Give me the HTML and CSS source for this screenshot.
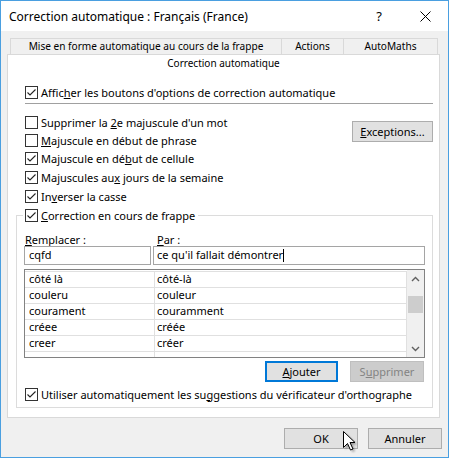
FILE: index.html
```html
<!DOCTYPE html>
<html lang="fr">
<head>
<meta charset="utf-8">
<title>Correction automatique</title>
<link rel="stylesheet" href="styles.css">
</head>
<body>
<div class="window">
  <div class="titlebar">
    <span class="title">Correction automatique : Français (France)</span>
    <span class="tb-btn help">?</span>
    <span class="tb-btn close"><svg width="11" height="11" viewBox="0 0 11 11"><path d="M0.5 0.5 L10.5 10.5 M10.5 0.5 L0.5 10.5" stroke="#000" stroke-width="1" fill="none"/></svg></span>
  </div>
  <div class="client">
    <div class="tabs">
      <div class="tab tab-1">Mise en forme automatique au cours de la frappe</div>
      <div class="tab tab-2">Actions</div>
      <div class="tab tab-3">AutoMaths</div>
    </div>
    <div class="panel">
      <div class="panel-title">Correction automatique</div>
      <div class="check first"><span class="box"><svg viewBox="0 0 11 11" width="11" height="11"><path d="M1.5 5.5 L4 8 L9.5 2.5" stroke="#222" stroke-width="1.1" fill="none"/></svg></span><span>Affic<u>h</u>er les boutons d'options de correction automatique</span></div>
      <div class="sep"></div>
      <div class="opts">
        <div class="opt-list">
          <div class="check"><span class="box"></span><span>Supprimer la <u>2</u>e majuscule d'un mot</span></div>
          <div class="check"><span class="box"></span><span><u>M</u>ajuscule en début de phrase</span></div>
          <div class="check"><span class="box"><svg viewBox="0 0 11 11" width="11" height="11"><path d="M1.5 5.5 L4 8 L9.5 2.5" stroke="#222" stroke-width="1.1" fill="none"/></svg></span><span>Majuscule en dé<u>b</u>ut de cellule</span></div>
          <div class="check"><span class="box"><svg viewBox="0 0 11 11" width="11" height="11"><path d="M1.5 5.5 L4 8 L9.5 2.5" stroke="#222" stroke-width="1.1" fill="none"/></svg></span><span>Majuscules au<u>x</u> jours de la semaine</span></div>
          <div class="check"><span class="box"><svg viewBox="0 0 11 11" width="11" height="11"><path d="M1.5 5.5 L4 8 L9.5 2.5" stroke="#222" stroke-width="1.1" fill="none"/></svg></span><span>In<u>v</u>erser la casse</span></div>
        </div>
        <button class="btn btn-exc"><u>E</u>xceptions...</button>
      </div>
      <div class="group">
        <div class="check group-head"><span class="box"><svg viewBox="0 0 11 11" width="11" height="11"><path d="M1.5 5.5 L4 8 L9.5 2.5" stroke="#222" stroke-width="1.1" fill="none"/></svg></span><span><u>C</u>orrection en cours de frappe</span></div>
        <div class="labels"><span class="lbl-1"><u>R</u>emplacer :</span><span class="lbl-2"><u>P</u>ar :</span></div>
        <div class="inputs">
          <div class="input input-1">cqfd</div>
          <div class="input input-2">ce qu'il fallait démontrer<span class="caret"></span></div>
        </div>
        <div class="list">
          <div class="list-rows">
            <div class="lrow"><span class="c1">côté là</span><span class="c2">côté-là</span></div>
            <div class="lrow"><span class="c1">couleru</span><span class="c2">couleur</span></div>
            <div class="lrow"><span class="c1">courament</span><span class="c2">couramment</span></div>
            <div class="lrow"><span class="c1">créee</span><span class="c2">créée</span></div>
            <div class="lrow"><span class="c1">creer</span><span class="c2">créer</span></div>
            <div class="lrow"><span class="c1"></span><span class="c2"></span></div>
          </div>
          <div class="scrollbar">
            <div class="arrow"><svg width="9" height="6" viewBox="0 0 9 6"><path d="M1 5 L4.5 1.5 L8 5" stroke="#606060" stroke-width="1.4" fill="none"/></svg></div>
            <div class="track"><div class="thumb"></div></div>
            <div class="arrow"><svg width="9" height="6" viewBox="0 0 9 6"><path d="M1 1 L4.5 4.5 L8 1" stroke="#606060" stroke-width="1.4" fill="none"/></svg></div>
          </div>
        </div>
        <div class="list-btns">
          <button class="btn btn-default btn-add"><u>A</u>jouter</button>
          <button class="btn btn-disabled btn-del">S<u>u</u>pprimer</button>
        </div>
        <div class="check use"><span class="box"><svg viewBox="0 0 11 11" width="11" height="11"><path d="M1.5 5.5 L4 8 L9.5 2.5" stroke="#222" stroke-width="1.1" fill="none"/></svg></span><span>Utiliser automatiquement les su<u>g</u>gestions du vérificateur d'orthographe</span></div>
      </div>
    </div>
    <div class="footer">
      <button class="btn btn-ok">OK</button>
      <button class="btn btn-cancel">Annuler</button>
    </div>
  </div>
  <svg class="cursor" width="16" height="24" viewBox="0 0 16 24">
    <defs><filter id="sh" x="-50%" y="-50%" width="200%" height="200%"><feGaussianBlur stdDeviation="1.2"/></filter></defs>
    <path d="M2.5 2.5 L2.5 18.5 L6.5 14.5 L9.5 21 L12 20 L9 13.5 L14 13.5 Z" fill="#000" opacity="0.35" filter="url(#sh)"/>
    <path d="M0.5 0.5 L0.5 16.5 L4.5 12.5 L7.5 19 L10 18 L7 11.5 L12 11.5 Z" fill="#fff" stroke="#000" stroke-width="1" stroke-linejoin="miter"/>
  </svg>
</div>
</body>
</html>
```
FILE: styles.css
```css
body {
  margin: 0;
  font-family: "Noto Sans", "Open Sans", sans-serif;
  font-size: 11px;
  color: #000;
}

.window {
  position: relative;
  width: 449px;
  height: 458px;
  box-sizing: border-box;
  border: 1px solid #4a9fe0;
  background: #f0f0f0;
  overflow: hidden;
}

.titlebar {
  height: 30px;
  background: #fff;
  display: flex;
  align-items: center;
}

.title {
  margin-left: 8px;
  font-size: 12px;
  flex: 1;
}

.tb-btn {
  width: 46px;
  height: 30px;
  display: flex;
  align-items: center;
  justify-content: center;
}

.help {
  font-size: 13px;
}

.client {
  padding-top: 7px;
}

.tabs {
  display: flex;
  margin-left: 9px;
  height: 16px;
}

.tab {
  box-sizing: border-box;
  height: 16px;
  border: 1px solid #d9d9d9;
  border-bottom: none;
  border-right: none;
  text-align: center;
  line-height: 15px;
  font-size: 10.1px;
  background: #f0f0f0;
}

.tab-1 { width: 271px; }
.tab-2 { width: 62px; }
.tab-3 { width: 95px; border-right: 1px solid #d9d9d9; }

.panel {
  margin-left: 6px;
  width: 433px;
  height: 364px;
  box-sizing: border-box;
  border: 1px solid #d9d9d9;
  background: #fff;
}

.panel-title {
  height: 18px;
  line-height: 17px;
  font-size: 10px;
  text-align: center;
}

.check {
  display: flex;
  align-items: center;
  height: 18px;
  margin-left: 17px;
  white-space: nowrap;
}

.box {
  width: 13px;
  height: 13px;
  box-sizing: border-box;
  border: 1px solid #333;
  background: #fff;
  margin-right: 3px;
  flex: none;
  display: flex;
}

.box svg {
  display: block;
}

.first {
  margin-top: 10px;
}

.sep {
  height: 1px;
  background: #a0a0a0;
  margin: 2px 6px 9px 17px;
}

.opts {
  display: flex;
  justify-content: space-between;
  margin-right: 6px;
}

.opt-list .check:nth-child(n+3) {
  height: 19px;
}

.btn {
  box-sizing: border-box;
  height: 21px;
  border: 1px solid #adadad;
  background: #e1e1e1;
  font: inherit;
  color: #000;
  padding: 0;
  text-align: center;
  line-height: 18px;
}

.btn-exc {
  width: 81px;
  margin-top: 8px;
}

.group {
  margin: 9px 6px 0 8px;
  border: 1px solid #dcdcdc;
  padding: 0 7px 4px 7px;
}

.group-head {
  margin: -10px 0 0 -1px;
  padding: 0 3px 0 2px;
  background: #fff;
  width: max-content;
}

.labels,
.inputs {
  display: grid;
  grid-template-columns: 127px 272px;
  column-gap: 2px;
}

.labels {
  height: 12px;
  margin-top: 10px;
  line-height: 12px;
}

.lbl-1 { padding-left: 1px; }
.lbl-2 { padding-left: 4px; }

.input {
  height: 19px;
  box-sizing: border-box;
  border: 1px solid #a5a5a5;
  line-height: 16px;
  white-space: nowrap;
}

.input-1 { padding-left: 4px; }
.input-2 { padding-left: 3px; }

.caret {
  display: inline-block;
  width: 1px;
  height: 13px;
  background: #000;
  vertical-align: -3px;
}

.list {
  margin-top: 4px;
  height: 89px;
  box-sizing: border-box;
  border: 1px solid #828282;
  display: flex;
}

.list-rows {
  flex: 1;
  padding-top: 1px;
  overflow: hidden;
}

.lrow {
  display: flex;
  height: 16px;
  box-sizing: border-box;
  border-top: 1px solid #e0e0e0;
  line-height: 14px;
  white-space: nowrap;
}

.c1 {
  width: 130px;
  box-sizing: border-box;
  border-right: 1px solid #e0e0e0;
  padding-left: 4px;
}

.c2 {
  flex: 1;
  padding-left: 2px;
  border-right: 1px solid #e0e0e0;
}

.scrollbar {
  width: 17px;
  flex: none;
  background: #f0f0f0;
  display: flex;
  flex-direction: column;
}

.arrow {
  height: 17px;
  display: flex;
  align-items: center;
  justify-content: center;
}

.track {
  flex: 1;
}

.thumb {
  height: 17px;
  margin: 9px 1px 0 1px;
  background: #cdcdcd;
}

.list-btns {
  display: flex;
  justify-content: flex-end;
  gap: 12px;
  margin-top: 3px;
  padding-right: 1px;
}

.btn-add {
  width: 73px;
  border: 2px solid #0078d7;
  line-height: 16px;
}

.btn-del {
  width: 74px;
}

.btn-disabled {
  background: #cccccc;
  border-color: #bfbfbf;
  color: #838383;
}

.use {
  margin-left: 1px;
  margin-top: 3px;
}

.footer {
  display: flex;
  justify-content: flex-end;
  gap: 10px;
  margin: 10px 6px 0 0;
}

.btn-ok,
.btn-cancel {
  width: 74px;
}

.cursor {
  position: absolute;
  left: 342px;
  top: 430px;
}
```
